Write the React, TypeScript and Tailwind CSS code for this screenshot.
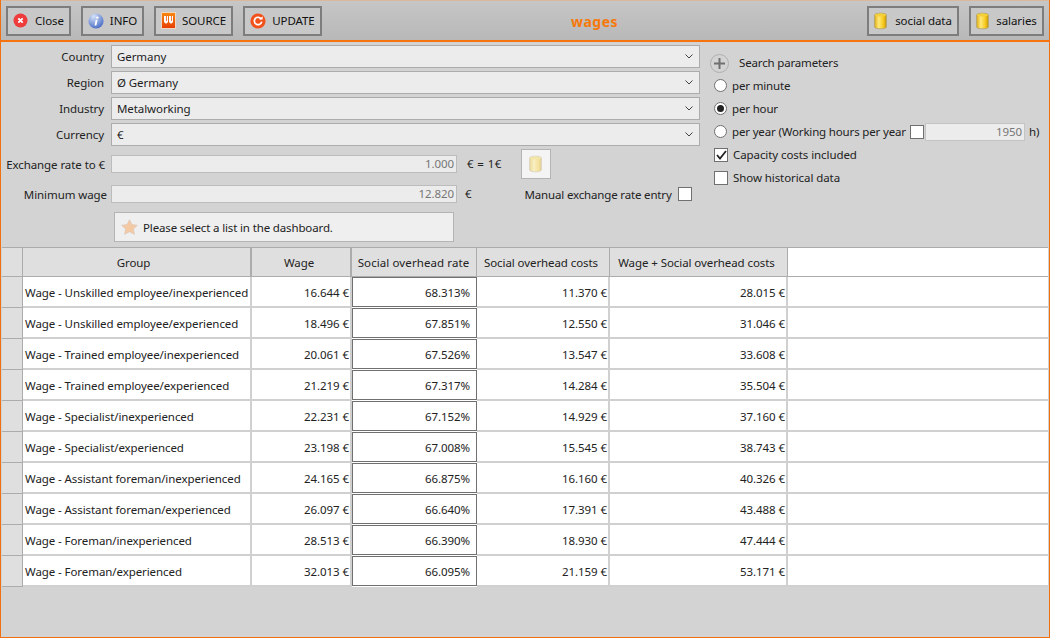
import React from "react";

const font = { fontFamily: '"Noto Sans", "Open Sans", sans-serif' };

function Cyl({ faded = false }: { faded?: boolean }) {
  const id = faded ? "cf" : "cy";
  return (
    <svg width="13" height="18" viewBox="0 0 13 18" className={faded ? "opacity-40" : ""}>
      <defs>
        <linearGradient id={id} x1="0" x2="1" y1="0" y2="0">
          <stop offset="0" stopColor="#e0ae10" />
          <stop offset="0.35" stopColor="#ffe97a" />
          <stop offset="0.75" stopColor="#f6c81c" />
          <stop offset="1" stopColor="#c49408" />
        </linearGradient>
      </defs>
      <path d="M0.6 3C0.6 0.6 12.4 0.6 12.4 3V15C12.4 17.4 0.6 17.4 0.6 15Z" fill={`url(#${id})`} stroke="#b3a46e" strokeWidth="0.9" />
      <ellipse cx="6.5" cy="3" rx="5.5" ry="1.6" fill="#f4cf3a" />
    </svg>
  );
}

function CloseIcon() {
  return (
    <svg width="15" height="15" viewBox="0 0 15 15">
      <circle cx="7.5" cy="7.5" r="7" fill="#ee3b3b" />
      <path d="M5.3 5.3L9.7 9.7M9.7 5.3L5.3 9.7" stroke="#fff" strokeWidth="1.8" />
    </svg>
  );
}
function InfoIcon() {
  return (
    <svg width="16" height="16" viewBox="0 0 16 16">
      <defs>
        <radialGradient id="inf" cx="0.35" cy="0.2" r="0.9">
          <stop offset="0" stopColor="#d5e2f7" />
          <stop offset="1" stopColor="#3d63c2" />
        </radialGradient>
      </defs>
      <circle cx="8" cy="8" r="7.6" fill="url(#inf)" />
      <path d="M7.6 7L9.6 6.7L8.4 12.6H6.6Z" fill="#fff" />
      <circle cx="9.3" cy="4.6" r="1.2" fill="#fff" />
    </svg>
  );
}
function SourceIcon() {
  return (
    <svg width="15" height="17" viewBox="0 0 15 17">
      <defs>
        <linearGradient id="src" x1="0" x2="0" y1="0" y2="1">
          <stop offset="0" stopColor="#f88a10" />
          <stop offset="1" stopColor="#e83c02" />
        </linearGradient>
      </defs>
      <rect x="0.5" y="0.5" width="14" height="16" fill="url(#src)" stroke="#efd6c0" />
      <path d="M3 4H7V10.5H6.2L5 12L3.8 10.5H3ZM8 4H12V10.5H11.2L10 12L8.8 10.5H8Z" fill="#fff" />
      <rect x="5" y="4" width="0.8" height="5" fill="#f25a0c" />
      <rect x="10" y="4" width="0.8" height="5" fill="#f25a0c" />
    </svg>
  );
}
function UpdateIcon() {
  return (
    <svg width="16" height="16" viewBox="0 0 16 16">
      <circle cx="8" cy="8" r="7.6" fill="#f2511b" />
      <path d="M11.3 6.2A3.7 3.7 0 1 0 11.7 8.6" fill="none" stroke="#fff" strokeWidth="1.7" />
      <path d="M9.2 6.6H12.6V3.2Z" fill="#fff" />
    </svg>
  );
}

function ToolButton({ icon, label, w, gap }: { icon: React.ReactNode; label: string; w: string; gap: string }) {
  return (
    <button className={`flex items-center justify-center h-[30px] border-2 border-[#7d7d7d] bg-[#c8c8c8] text-[#111] ${w} ${gap}`}>
      {icon}
      <span className="pt-px">{label}</span>
    </button>
  );
}

function Chevron() {
  return (
    <svg width="8" height="5" viewBox="0 0 8 5">
      <path d="M0.5 0.5L4 4L7.5 0.5" fill="none" stroke="#444" strokeWidth="1" />
    </svg>
  );
}

function SelectRow({ label, value }: { label: string; value: string }) {
  return (
    <div className="flex items-center h-[23px]">
      <div className="w-[103px] text-right text-[#222]">{label}</div>
      <div className="ml-[7px] flex-1 h-[23px] border border-[#acacac] bg-[#ececec] flex items-center justify-between pl-[5px] pr-[6px] text-[#222]">
        <span>{value}</span>
        <Chevron />
      </div>
    </div>
  );
}

function CheckBox({ checked = false }: { checked?: boolean }) {
  return (
    <span className="w-[14px] h-[14px] shrink-0 border border-[#707070] bg-white flex items-center justify-center">
      {checked && (
        <svg width="11" height="10" viewBox="0 0 11 10">
          <path d="M1 5L4 8.5L10 1" fill="none" stroke="#222" strokeWidth="1.8" />
        </svg>
      )}
    </span>
  );
}

function Radio({ on = false, label, extra }: { on?: boolean; label: string; extra?: React.ReactNode }) {
  return (
    <div className="flex items-center h-[23px]">
      <span className="w-[13px] h-[13px] shrink-0 rounded-full border border-[#707070] bg-white flex items-center justify-center mr-[5px] ml-[4px]">
        {on && <span className="w-[7px] h-[7px] rounded-full bg-[#222]" />}
      </span>
      <span className="text-[#222] whitespace-nowrap tracking-[-0.16px]">{label}</span>
      {extra}
    </div>
  );
}

const rows = [
  ["Wage - Unskilled employee/inexperienced", "16.644 €", "68.313%", "11.370 €", "28.015 €"],
  ["Wage - Unskilled employee/experienced", "18.496 €", "67.851%", "12.550 €", "31.046 €"],
  ["Wage - Trained employee/inexperienced", "20.061 €", "67.526%", "13.547 €", "33.608 €"],
  ["Wage - Trained employee/experienced", "21.219 €", "67.317%", "14.284 €", "35.504 €"],
  ["Wage - Specialist/inexperienced", "22.231 €", "67.152%", "14.929 €", "37.160 €"],
  ["Wage - Specialist/experienced", "23.198 €", "67.008%", "15.545 €", "38.743 €"],
  ["Wage - Assistant foreman/inexperienced", "24.165 €", "66.875%", "16.160 €", "40.326 €"],
  ["Wage - Assistant foreman/experienced", "26.097 €", "66.640%", "17.391 €", "43.488 €"],
  ["Wage - Foreman/inexperienced", "28.513 €", "66.390%", "18.930 €", "47.444 €"],
  ["Wage - Foreman/experienced", "32.013 €", "66.095%", "21.159 €", "53.171 €"],
];

const grid = "grid grid-cols-[21px_229px_100px_125px_133px_178px_1fr]";

export default function App() {
  return (
    <div style={font} className="w-[1050px] h-[638px] overflow-hidden bg-[#d3d3d3] text-[11.5px] tracking-[-0.08px] border-l border-r border-b border-[#f07010] flex flex-col">
      <header className="h-[42px] shrink-0 border-t border-t-[#d9b89c] border-b-2 border-b-[#f57410] bg-gradient-to-b from-[#c6c6c6] to-[#b8b8b8] flex items-center pl-[5px] pr-[5px]">
        <div className="flex gap-[10px] flex-1 items-center">
          <ToolButton icon={<CloseIcon />} label="Close" w="w-[65px]" gap="gap-[7px]" />
          <ToolButton icon={<InfoIcon />} label="INFO" w="w-[63px]" gap="gap-[6px]" />
          <ToolButton icon={<SourceIcon />} label="SOURCE" w="w-[79px]" gap="gap-[6px]" />
          <ToolButton icon={<UpdateIcon />} label="UPDATE" w="w-[79px]" gap="gap-[6px]" />
          <div className="flex-1 text-center font-bold text-[14px] tracking-[0.5px] text-[#f7780a] pt-px">wages</div>
        </div>
        <div className="flex gap-[10px] shrink-0 ml-[10px]">
          <ToolButton icon={<Cyl />} label="social data" w="w-[92px]" gap="gap-[8px]" />
          <ToolButton icon={<Cyl />} label="salaries" w="w-[75px]" gap="gap-[7px]" />
        </div>
      </header>

      <section className="h-[205px] shrink-0 flex pt-[3px]">
        <div className="w-[699px] shrink-0 flex flex-col">
          <div className="flex flex-col gap-[3px]">
            <SelectRow label="Country" value="Germany" />
            <SelectRow label="Region" value="Ø Germany" />
            <SelectRow label="Industry" value="Metalworking" />
            <SelectRow label="Currency" value="€" />
          </div>
          <div className="flex items-center h-[30px] mt-[3px]">
            <div className="w-[104px] text-right text-[#222] whitespace-nowrap pt-px">Exchange rate to €</div>
            <div className="ml-[6px] w-[346px] h-[18px] border border-[#bcbcbc] bg-[#ececec] text-right pr-[2px] text-[#777] leading-[16px]">1.000</div>
            <span className="ml-[10px] text-[#222] tracking-[0.4px]">€ = 1€</span>
            <span className="ml-[19px] w-[30px] h-[30px] border border-[#b4b4b4] bg-[#f4f4f4] flex items-center justify-center"><Cyl faded /></span>
          </div>
          <div className="flex items-center h-[18px] mt-[6px]">
            <div className="w-[106px] text-right text-[#222] pt-px">Minimum wage</div>
            <div className="ml-[4px] w-[346px] h-[18px] border border-[#bcbcbc] bg-[#ececec] text-right pr-[2px] text-[#777] leading-[16px]">12.820</div>
            <span className="ml-[8px] text-[#222]">€</span>
            <span className="ml-[53px] text-[#222] whitespace-nowrap pt-px tracking-[-0.16px]">Manual exchange rate entry</span>
            <span className="ml-[6px]"><CheckBox /></span>
          </div>
          <div className="ml-[113px] mt-[9px] w-[340px] h-[30px] border border-[#b4b4b4] bg-[#efefef] flex items-center pl-[6px] gap-[5px] text-[#222]">
            <svg width="17" height="16" viewBox="0 0 17 16">
              <path d="M8.5 0.7L10.9 5.6L16.3 6.3L12.4 10L13.4 15.3L8.5 12.7L3.6 15.3L4.6 10L0.7 6.3L6.1 5.6Z" fill="#f5c9a4" stroke="#d9c7b7" strokeWidth="0.7" />
            </svg>
            <span className="pt-[2px] tracking-[-0.14px]">Please select a list in the dashboard.</span>
          </div>
        </div>

        <div className="flex-1 pl-[10px] flex flex-col">
          <div className="flex items-center h-[20px] mt-[8px]">
            <span className="w-[19px] h-[19px] rounded-full border border-[#b0b0b0] flex items-center justify-center">
              <svg width="11" height="11" viewBox="0 0 11 11">
                <path d="M5.5 0V11M0 5.5H11" stroke="#707070" strokeWidth="2" />
              </svg>
            </span>
            <span className="ml-[10px] text-[#222] tracking-[-0.16px]">Search parameters</span>
          </div>
          <div className="mt-px">
            <Radio label="per minute" />
            <Radio on label="per hour" />
            <Radio
              label="per year (Working hours per year"
              extra={
                <>
                  <span className="ml-[4px]"><CheckBox /></span>
                  <span className="ml-px w-[100px] h-[18px] shrink-0 border border-[#c4c4c4] bg-[#ececec] text-right pr-[2px] text-[#777] leading-[16px]">1950</span>
                  <span className="ml-[4px] text-[#222]">h)</span>
                </>
              }
            />
            <div className="flex items-center h-[23px] ml-[4px] gap-[5px] text-[#222]">
              <CheckBox checked /> <span>Capacity costs included</span>
            </div>
            <div className="flex items-center h-[23px] ml-[4px] gap-[5px] text-[#222]">
              <CheckBox /> <span>Show historical data</span>
            </div>
          </div>
        </div>
      </section>

      <section className="ml-px mr-px border-t border-[#ababab] shrink-0">
        <div className={`${grid} h-[29px] bg-[#dfdfdf] text-[#222]`}>
          <div className="border-r border-b border-[#acacac]" />
          <div className="border-r-2 border-b border-[#acacac] flex items-center justify-center pt-[2px] pr-[6px]">Group</div>
          <div className="border-r-2 border-b border-[#acacac] flex items-center justify-center pt-[2px] pr-[4px]">Wage</div>
          <div className="border-r border-b border-[#acacac] flex items-center justify-center pt-[2px] pr-[1px] tracking-[0.1px]">Social overhead rate</div>
          <div className="border-r border-b border-[#acacac] flex items-center justify-center pt-[2px] pr-[4px]">Social overhead costs</div>
          <div className="border-r border-b border-[#acacac] flex items-center justify-center pt-[2px] pr-[4px]">Wage + Social overhead costs</div>
          <div className="bg-white border-b border-[#acacac]" />
        </div>
        {rows.map((r) => (
          <div key={r[0]} className={`${grid} h-[31px] text-[#222] bg-white`}>
            <div className="bg-[#dfdfdf] border-r border-b border-[#acacac]" />
            <div className="border-r-2 border-b-2 border-[#d0d0d0] flex items-center pl-[2px] pt-[2px] whitespace-nowrap">{r[0]}</div>
            <div className="border-r-2 border-b-2 border-[#d0d0d0] flex items-center justify-end pr-[1px] pt-[2px]">{r[1]}</div>
            <div className="border border-[#707070] flex items-center justify-end pr-[6px] pt-[2px] mb-px">{r[2]}</div>
            <div className="border-r-2 border-b-2 border-[#d0d0d0] flex items-center justify-end pr-[1px] pt-[2px]">{r[3]}</div>
            <div className="border-r-2 border-b-2 border-[#d0d0d0] flex items-center justify-end pr-[1px] pt-[2px]">{r[4]}</div>
            <div className="border-b-2 border-[#d0d0d0]" />
          </div>
        ))}
      </section>
    </div>
  );
}
